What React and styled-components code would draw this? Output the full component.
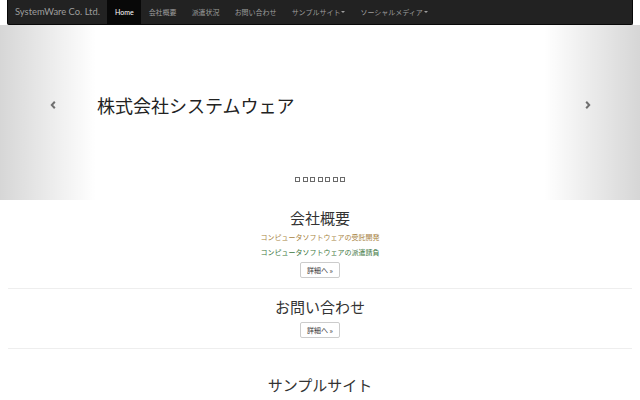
import React from 'react';
import styled, { createGlobalStyle } from 'styled-components';

const Global = createGlobalStyle`
  html, body { margin: 0; padding: 0; background: #fff; }
  body {
    font-family: Lato, "Noto Sans CJK JP", sans-serif;
    color: #333;
    overflow: hidden;
  }
  * { box-sizing: border-box; }
`;

const Page = styled.div`
  width: 640px;
  height: 400px;
  overflow: hidden;
  display: flex;
  flex-direction: column;
`;

const Navbar = styled.nav`
  margin: 0 7px;
  height: 25px;
  flex: none;
  background: #222;
  border: 1px solid #080808;
  border-top: 0;
  border-radius: 0 0 2px 2px;
  display: flex;
  align-items: stretch;
`;

const Brand = styled.a`
  padding: 0 7.5px 0 7px;
  font-size: 9.4px;
  line-height: 24px;
  color: #9d9d9d;
  text-decoration: none;
  white-space: nowrap;
`;

const NavList = styled.ul`
  list-style: none;
  margin: 0;
  padding: 0;
  display: flex;
`;

const NavItem = styled.li`
  padding: 0 7.5px;
  font-size: 7px;
  line-height: 24px;
  white-space: nowrap;
  color: ${p => (p.$active ? '#fff' : '#9d9d9d')};
  background: ${p => (p.$active ? '#080808' : 'transparent')};
  display: flex;
  align-items: center;
`;

const Caret = styled.span`
  display: inline-block;
  width: 0;
  height: 0;
  margin-left: 1px;
  border-top: 2px solid #9d9d9d;
  border-left: 2px solid transparent;
  border-right: 2px solid transparent;
`;

const Carousel = styled.section`
  height: 175px;
  flex: none;
  display: flex;
`;

const Control = styled.div`
  width: 96px;
  flex: none;
  display: flex;
  align-items: center;
  justify-content: center;
  padding-bottom: 15px;
  padding-${p => (p.$side === 'left' ? 'left' : 'right')}: 9px;
  background: linear-gradient(
    ${p => (p.$side === 'left' ? 'to right' : 'to left')},
    rgba(0, 0, 0, 0.16),
    rgba(0, 0, 0, 0)
  );
`;

const Slide = styled.div`
  flex: 1;
  display: flex;
  flex-direction: column;
  align-items: stretch;
`;

const Caption = styled.h1`
  margin: 70px 0 0 1px;
  font-size: 18px;
  line-height: 20px;
  font-weight: 400;
  color: #222;
  font-family: "Noto Sans CJK JP", sans-serif;
`;

const Indicators = styled.ol`
  list-style: none;
  margin: auto 0 18px;
  padding: 0;
  display: flex;
  justify-content: center;
  gap: 2.5px;
`;

const Dot = styled.li`
  width: 5px;
  height: 5px;
  border: 1px solid #6a6a6a;
  background: #fff;
`;

const Main = styled.main`
  padding: 0 8px;
  display: flex;
  flex-direction: column;
`;

const Section = styled.div`
  display: flex;
  flex-direction: column;
  align-items: center;
`;

const Heading = styled.h2`
  margin: ${p => p.$top}px 0 5px;
  font-size: 15px;
  line-height: 16.5px;
  font-weight: 400;
  color: #333;
  font-family: "Noto Sans CJK JP", sans-serif;
`;

const Line = styled.p`
  margin: 0 0 5px;
  font-size: 7px;
  line-height: 10px;
  color: ${p => p.$color};
  font-family: "Noto Sans CJK JP", sans-serif;
`;

const Button = styled.a`
  margin-top: ${p => p.$top || 0}px;
  display: inline-block;
  padding: 2px 6px;
  font-size: 7px;
  line-height: 10px;
  color: #333;
  background: #fff;
  border: 1px solid #ccc;
  border-radius: 2px;
  text-decoration: none;
  font-family: "Noto Sans CJK JP", sans-serif;
`;

const Rule = styled.hr`
  align-self: stretch;
  margin: 10px 0 0;
  border: 0;
  border-top: 1px solid #eee;
`;

const Chevron = ({ dir }) => (
  <svg width="6" height="8" viewBox="0 0 6 8">
    <path
      d={dir === 'left' ? 'M4.8 0.8 L1.8 4 L4.8 7.2' : 'M1.2 0.8 L4.2 4 L1.2 7.2'}
      stroke="#6f6f6f"
      strokeWidth="2"
      fill="none"
    />
  </svg>
);

const navItems = [
  { label: 'Home', active: true },
  { label: '会社概要' },
  { label: '派遣状況' },
  { label: 'お問い合わせ' },
  { label: 'サンプルサイト', caret: true },
  { label: 'ソーシャルメディア', caret: true },
];

export default function App() {
  return (
    <Page>
      <Global />
      <Navbar>
        <Brand href="#">SystemWare Co. Ltd.</Brand>
        <NavList>
          {navItems.map(it => (
            <NavItem key={it.label} $active={it.active}>
              {it.label}
              {it.caret && <Caret />}
            </NavItem>
          ))}
        </NavList>
      </Navbar>
      <Carousel>
        <Control $side="left">
          <Chevron dir="left" />
        </Control>
        <Slide>
          <Caption>株式会社システムウェア</Caption>
          <Indicators>
            {Array.from({ length: 7 }).map((_, i) => (
              <Dot key={i} />
            ))}
          </Indicators>
        </Slide>
        <Control $side="right">
          <Chevron dir="right" />
        </Control>
      </Carousel>
      <Main>
        <Section>
          <Heading $top={10}>会社概要</Heading>
          <Line $color="#a8843f">コンピュータソフトウェアの受託開発</Line>
          <Line $color="#3c763d">コンピュータソフトウェアの派遣請負</Line>
          <Button href="#">詳細へ »</Button>
          <Rule />
        </Section>
        <Section>
          <Heading $top={10}>お問い合わせ</Heading>
          <Button href="#" $top={2}>詳細へ »</Button>
          <Rule />
        </Section>
        <Section>
          <Heading $top={28}>サンプルサイト</Heading>
        </Section>
      </Main>
    </Page>
  );
}
